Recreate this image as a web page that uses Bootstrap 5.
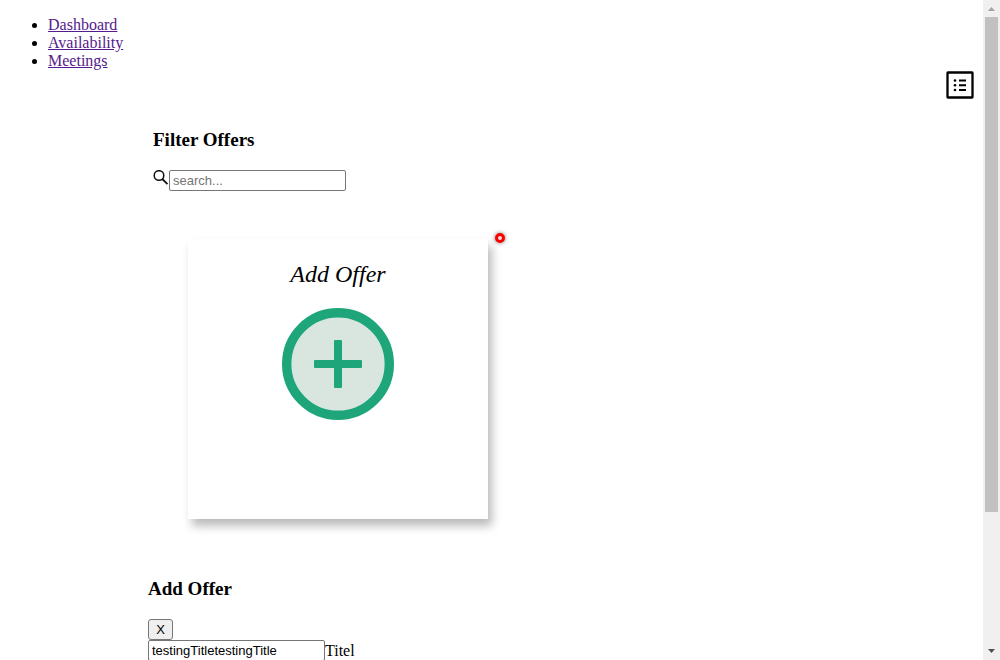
<!DOCTYPE html>
<html lang="en">
<head>
<meta charset="utf-8">
<meta name="viewport" content="width=device-width, initial-scale=1">
<title>Offers</title>
<link rel="stylesheet" href="https://cdn.jsdelivr.net/npm/bootstrap@5.3.0/dist/css/bootstrap.min.css">
<style>
body { font: 16px/18px "Liberation Serif", "Times New Roman", serif; color: #000; }
.main-links { padding: 16px 0 0 48px; }
.main-links a { color: #551a8b; }
.menu-toggle { width: 32px; height: 32px; margin-right: 7px; }
.offers { padding: 27px 0 0 148px; }
.filter { padding-left: 5px; }
.section-title { font-size: 19px; line-height: 21px; font-weight: bold; margin-bottom: 20px; }
.text-field { width: 177px; height: 21px; padding: 1px 3px; border: 1px solid #767676; border-radius: 2px; font: 13px/15px "Liberation Sans", Arial, sans-serif; color: #000; background: #fff; }
.text-field::placeholder { color: #757575; opacity: 1; }
.offer-card { width: 300px; height: 280px; margin: 48px 0 59px 40px; padding-top: 21px; background: #fff; box-shadow: 4px 7px 9px #bbb; }
.offer-card-title { font-size: 24px; line-height: 28px; font-style: italic; }
.add-button { margin-top: 20px; }
.close-button { width: 25px; height: 21px; border: 1px solid #767676; border-radius: 3px; background: #efefef; color: #000; font: 13px/15px "Liberation Sans", Arial, sans-serif; }
.pointer-dot { left: 50%; top: 238px; width: 10px; height: 10px; border: 3px solid #f00; background: #ffd8d8; box-shadow: 0 0 4px #777; }
.scroll-rail { width: 17px; background: #f0f0f0; }
.scroll-arrow { height: 17px; }
.scroll-thumb { width: 13px; height: 79%; background: #c1c1c1; }
</style>
</head>
<body>
<div class="d-flex vh-100 overflow-hidden position-relative">
  <div class="flex-grow-1 overflow-hidden">
    <nav aria-label="Main">
      <ul class="main-links mb-0">
        <li><a href="#dashboard">Dashboard</a></li>
        <li><a href="#availability">Availability</a></li>
        <li><a href="#meetings">Meetings</a></li>
      </ul>
    </nav>
    <div class="d-flex justify-content-end">
      <button type="button" class="menu-toggle border-0 bg-transparent p-0 d-flex" aria-label="Show list">
        <svg width="32" height="32" viewBox="0 0 32 32" aria-hidden="true">
          <rect x="3.5" y="2.5" width="25" height="25" rx=".5" fill="none" stroke="#000" stroke-width="2.3"/>
          <g><circle cx="11" cy="10.5" r="1.3"/><circle cx="11" cy="15.2" r="1.3"/><circle cx="11" cy="20" r="1.3"/></g>
          <path d="M15 9.5h7v2h-7zM15 14.2h7v2h-7zM15 19h7v2h-7z"/>
        </svg>
      </button>
    </div>
    <main class="offers">
      <section class="filter">
        <h3 class="section-title">Filter Offers</h3>
        <div class="d-flex">
          <label for="search" aria-label="Search">
            <svg class="d-block" width="16" height="16" viewBox="0 0 16 16" fill="none" stroke="#111" aria-hidden="true">
              <circle cx="6" cy="5.5" r="4.8" stroke-width="1.5"/>
              <path d="M9.3 9l5.2 5.2" stroke-width="1.8"/>
            </svg>
          </label>
          <input id="search" class="text-field" type="text" placeholder="search...">
        </div>
      </section>
      <section class="offer-card d-flex flex-column align-items-center">
        <div class="offer-card-title">Add Offer</div>
        <button type="button" class="add-button border-0 bg-transparent p-0" aria-label="Add offer">
          <svg class="d-block" width="112" height="112" viewBox="0 0 112 112" aria-hidden="true">
            <circle cx="56" cy="56" r="51.3" fill="#d9e6df" stroke="#1ea67a" stroke-width="9.4"/>
            <path d="M53 32h6q1 0 1 1v19h19q1 0 1 1v6q0 1-1 1H60v19q0 1-1 1h-6q-1 0-1-1V60H33q-1 0-1-1v-6q0-1 1-1h19V33q0-1 1-1z" fill="#1ea67a"/>
          </svg>
        </button>
      </section>
      <section>
        <h3 class="section-title">Add Offer</h3>
        <form>
          <button type="button" class="close-button d-block p-0" aria-label="Close">X</button>
          <div class="d-flex align-items-center">
            <input id="title" class="text-field" type="text" value="testingTitletestingTitle">
            <label for="title">Titel</label>
          </div>
        </form>
      </section>
    </main>
  </div>
  <div class="scroll-rail d-flex flex-column align-items-center flex-shrink-0" aria-hidden="true">
    <svg class="scroll-arrow flex-shrink-0" width="17" height="17" viewBox="0 0 17 17"><path d="M5 11l3.5-4 3.5 4z" fill="#a3a3a3"/></svg>
    <div class="flex-grow-1"><div class="scroll-thumb"></div></div>
    <svg class="scroll-arrow flex-shrink-0" width="17" height="17" viewBox="0 0 17 17"><path d="M5 6l3.5 4L12 6z" fill="#505050"/></svg>
  </div>
  <span class="pointer-dot position-absolute translate-middle rounded-circle"></span>
</div>
<script src="https://cdn.jsdelivr.net/npm/bootstrap@5.3.0/dist/js/bootstrap.bundle.min.js"></script>
</body>
</html>
